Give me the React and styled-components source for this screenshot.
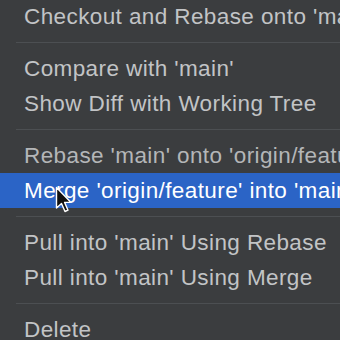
import React from 'react';
import styled, { createGlobalStyle } from 'styled-components';

const GlobalStyle = createGlobalStyle`
  html, body {
    margin: 0;
    padding: 0;
    background: #3b3d3f;
    overflow: hidden;
  }
`;

const Menu = styled.div`
  position: relative;
  width: 340px;
  height: 340px;
  overflow: hidden;
  background: #3b3d3f;
  font-family: 'Liberation Sans', Arial, sans-serif;
  font-size: 22.5px;
  letter-spacing: 0.4px;
  display: flex;
  flex-direction: column;
  margin-top: -1px;
`;

const Item = styled.div`
  height: 35px;
  flex: none;
  display: flex;
  align-items: center;
  padding-left: 24px;
  white-space: nowrap;
  color: ${(p) => (p.$active ? '#ffffff' : p.$dim ? '#b4b6b8' : '#c2c4c6')};
  background: ${(p) => (p.$active ? '#2b64c6' : 'transparent')};
`;

const Separator = styled.div`
  height: 17px;
  flex: none;
  display: flex;
  align-items: center;
  padding-left: 16px;
  &::after {
    content: '';
    flex: 1;
    height: 1px;
    background: #4c4f52;
  }
`;

const Cursor = styled.svg`
  position: absolute;
  left: 55px;
  top: 187px;
`;

const menu = [
  { label: "Checkout and Rebase onto 'main'" },
  { sep: true },
  { label: "Compare with 'main'" },
  { label: 'Show Diff with Working Tree' },
  { sep: true },
  { label: "Rebase 'main' onto 'origin/feature'", dim: true },
  { label: "Merge 'origin/feature' into 'main'", active: true },
  { sep: true },
  { label: "Pull into 'main' Using Rebase" },
  { label: "Pull into 'main' Using Merge" },
  { sep: true },
  { label: 'Delete' },
];

export default function App() {
  return (
    <>
      <GlobalStyle />
      <Menu>
        {menu.map((m, i) =>
          m.sep ? (
            <Separator key={i} />
          ) : (
            <Item key={i} $active={m.active} $dim={m.dim}>
              {m.label}
            </Item>
          )
        )}
        <Cursor width="18" height="28" viewBox="0 0 18 28">
          <path
            d="M1.5 1.5 L1.5 22 L6.5 17.5 L10 25.5 L13 24.2 L9.6 16.4 L16 16.4 Z"
            fill="#111"
            stroke="#fff"
            strokeWidth="1.4"
            strokeLinejoin="round"
          />
        </Cursor>
      </Menu>
    </>
  );
}
